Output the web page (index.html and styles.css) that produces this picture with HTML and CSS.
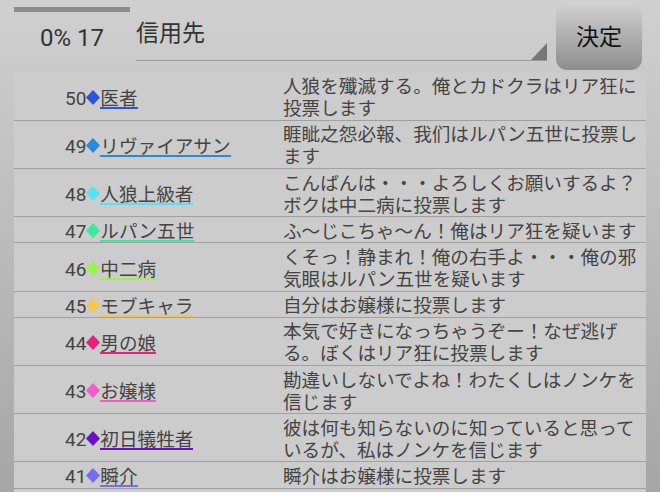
FILE: index.html
```html
<!DOCTYPE html>
<html lang="ja">
<head>
<meta charset="utf-8">
<title>投票</title>
<link rel="stylesheet" href="styles.css">
</head>
<body>
<div class="app">
  <header class="header">
    <div class="counter">
      <div class="counter-bar"></div>
      <div class="counter-text">0% 17</div>
    </div>
    <div class="spinner">
      <div class="spinner-text">信用先</div>
      <div class="spinner-arrow"></div>
    </div>
    <button class="decide">決定</button>
  </header>
  <div class="table">
    <div class="row">
      <div class="name-cell"><div class="tag"><span class="num">50</span><svg class="dia c50" viewBox="0 0 14 15"><polygon points="7,0 14,7.5 7,15 0,7.5"/></svg><span class="name c50">医者</span></div></div>
      <div class="msg">人狼を殲滅する。俺とカドクラはリア狂に投票します</div>
    </div>
    <div class="row">
      <div class="name-cell"><div class="tag"><span class="num">49</span><svg class="dia c49" viewBox="0 0 14 15"><polygon points="7,0 14,7.5 7,15 0,7.5"/></svg><span class="name c49">リヴァイアサン</span></div></div>
      <div class="msg">睚眦之怨必報、我们はルパン五世に投票します</div>
    </div>
    <div class="row">
      <div class="name-cell"><div class="tag"><span class="num">48</span><svg class="dia c48" viewBox="0 0 14 15"><polygon points="7,0 14,7.5 7,15 0,7.5"/></svg><span class="name c48">人狼上級者</span></div></div>
      <div class="msg">こんばんは・・・よろしくお願いするよ？ボクは中二病に投票します</div>
    </div>
    <div class="row">
      <div class="name-cell"><div class="tag"><span class="num">47</span><svg class="dia c47" viewBox="0 0 14 15"><polygon points="7,0 14,7.5 7,15 0,7.5"/></svg><span class="name c47">ルパン五世</span></div></div>
      <div class="msg">ふ〜じこちゃ〜ん！俺はリア狂を疑います</div>
    </div>
    <div class="row">
      <div class="name-cell"><div class="tag"><span class="num">46</span><svg class="dia c46" viewBox="0 0 14 15"><polygon points="7,0 14,7.5 7,15 0,7.5"/></svg><span class="name c46">中二病</span></div></div>
      <div class="msg">くそっ！静まれ！俺の右手よ・・・俺の邪気眼はルパン五世を疑います</div>
    </div>
    <div class="row">
      <div class="name-cell"><div class="tag"><span class="num">45</span><svg class="dia c45" viewBox="0 0 14 15"><polygon points="7,0 14,7.5 7,15 0,7.5"/></svg><span class="name c45">モブキャラ</span></div></div>
      <div class="msg">自分はお嬢様に投票します</div>
    </div>
    <div class="row">
      <div class="name-cell"><div class="tag"><span class="num">44</span><svg class="dia c44" viewBox="0 0 14 15"><polygon points="7,0 14,7.5 7,15 0,7.5"/></svg><span class="name c44">男の娘</span></div></div>
      <div class="msg">本気で好きになっちゃうぞー！なぜ逃げる。ぼくはリア狂に投票します</div>
    </div>
    <div class="row">
      <div class="name-cell"><div class="tag"><span class="num">43</span><svg class="dia c43" viewBox="0 0 14 15"><polygon points="7,0 14,7.5 7,15 0,7.5"/></svg><span class="name c43">お嬢様</span></div></div>
      <div class="msg">勘違いしないでよね！わたくしはノンケを信じます</div>
    </div>
    <div class="row">
      <div class="name-cell"><div class="tag"><span class="num">42</span><svg class="dia c42" viewBox="0 0 14 15"><polygon points="7,0 14,7.5 7,15 0,7.5"/></svg><span class="name c42">初日犠牲者</span></div></div>
      <div class="msg">彼は何も知らないのに知っていると思っているが、私はノンケを信じます</div>
    </div>
    <div class="row">
      <div class="name-cell"><div class="tag"><span class="num">41</span><svg class="dia c41" viewBox="0 0 14 15"><polygon points="7,0 14,7.5 7,15 0,7.5"/></svg><span class="name c41">瞬介</span></div></div>
      <div class="msg">瞬介はお嬢様に投票します</div>
    </div>
  </div>
</div>
</body>
</html>
```

FILE: styles.css
```css
html, body {
  margin: 0;
  padding: 0;
}
body {
  width: 660px;
  height: 492px;
  overflow: hidden;
  background: linear-gradient(#d0d0d0, #a6a6a6);
  font-family: Roboto, "Noto Sans CJK JP", sans-serif;
  color: #444;
}
.app {
  display: flex;
  flex-direction: column;
  height: 492px;
}
.header {
  display: flex;
  height: 72.7px;
  padding: 0 18px 0 14px;
  box-sizing: border-box;
  flex: none;
}
.counter {
  width: 116px;
  padding-top: 7px;
}
.counter-bar {
  height: 5px;
  background: #8c8c8c;
}
.counter-text {
  margin-top: 11.7px;
  text-align: center;
  font-size: 24px;
  line-height: 28px;
  color: #333;
}
.spinner {
  margin-left: 6px;
  width: 411px;
  height: 60px;
  display: flex;
  border-bottom: 1.5px solid #9a9a9a;
}
.spinner-text {
  flex: 1;
  padding-top: 19px;
  font-size: 23px;
  line-height: 24px;
  color: #333;
  font-family: "Noto Sans CJK JP", sans-serif;
}
.spinner-arrow {
  align-self: flex-end;
  width: 0;
  height: 0;
  border-left: 16px solid transparent;
  border-bottom: 17px solid #777;
}
.decide {
  margin: 2px 0 0 9px;
  width: 86px;
  height: 68px;
  border: none;
  border-radius: 11px;
  background: linear-gradient(#d2d2d2, #8d8d8d);
  font-family: "Noto Sans CJK JP", sans-serif;
  font-size: 23px;
  color: #111;
  padding: 0 0 2px 0;
  display: flex;
  align-items: center;
  justify-content: center;
}
.table {
  flex: 1;
  margin: 0 14px;
  background: #cccccc;
  overflow: hidden;
}
.row {
  display: grid;
  grid-template-columns: 269px 1fr;
  border-bottom: 1px solid #a0a0a0;
  font-size: 18.6px;
}
.name-cell {
  display: flex;
  align-items: center;
  padding-left: 51px;
}
.tag {
  display: flex;
  align-items: baseline;
  margin-top: 2px;
}
.num {
  line-height: 21px;
  font-size: 19px;
}
.dia {
  width: 14px;
  height: 15px;
  flex: none;
  margin-bottom: -1px;
}
.name {
  display: inline-block;
  line-height: 21px;
  border-bottom: 2px solid currentColor;
  font-family: "Noto Sans CJK JP", sans-serif;
  color: #444;
}
.msg {
  padding: 1.6px 0;
  line-height: 22px;
  font-family: "Noto Sans CJK JP", sans-serif;
}
.c50 { fill: #2b55dc; border-bottom-color: #2b55dc; }
.c49 { fill: #2a8ad8; border-bottom-color: #2a8ad8; }
.c48 { fill: #55e2f6; border-bottom-color: #55e2f6; }
.c47 { fill: #3ee89a; border-bottom-color: #3ee89a; }
.c46 { fill: #9ff04c; border-bottom-color: #9ff04c; }
.c45 { fill: #f6c650; border-bottom-color: #f6c650; }
.c44 { fill: #e8207c; border-bottom-color: #e8207c; }
.c43 { fill: #f65cc4; border-bottom-color: #f65cc4; }
.c42 { fill: #6a12c2; border-bottom-color: #6a12c2; }
.c41 { fill: #7a6cf0; border-bottom-color: #7a6cf0; }
```
